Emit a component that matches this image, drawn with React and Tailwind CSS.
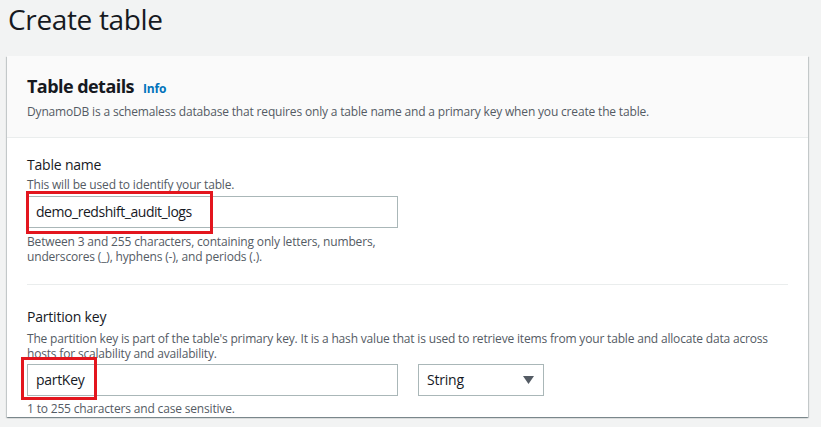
import React from "react";

const font = { fontFamily: '"Open Sans", "Noto Sans", sans-serif' };

export default function App() {
  return (
    <div
      className="w-[821px] h-[427px] overflow-hidden bg-[#f2f3f3] px-[7px] pt-px text-[#16191f]"
      style={font}
    >
      <h1 className="text-[28px] leading-[36px] ml-[1px] font-normal tracking-[-0.35px] text-[#16191f]">
        Create table
      </h1>
      <div className="mt-[19px] w-[801px] bg-white shadow-[0_1px_1px_0_rgba(0,28,36,0.3),1px_1px_1px_0_rgba(0,28,36,0.15),-1px_1px_1px_0_rgba(0,28,36,0.15)]">
        <div className="bg-[#fafafa] border-b border-[#eaeded] px-[20px] pt-[19px] pb-[17px]">
          <div className="flex items-baseline gap-[9px]">
            <h2 className="text-[18px] leading-[22px] font-bold tracking-[-0.55px]">Table details</h2>
            <span className="text-[12px] leading-[16px] font-bold tracking-[-0.2px] text-[#0073bb]">Info</span>
          </div>
          <p className="mt-[7px] text-[12px] leading-[16px] tracking-[-0.17px] text-[#545b64]">
            DynamoDB is a schemaless database that requires only a table name and a primary key when you create the table.
          </p>
        </div>
        <div className="px-[20px] pt-[17px]">
          <div className="text-[14px] leading-[20px] tracking-[-0.2px]">Table name</div>
          <div className="mt-[2px] text-[12px] leading-[16px] tracking-[-0.17px] text-[#545b64]">
            This will be used to identify your table.
          </div>
          <div className="relative mt-[3px] w-[371px]">
            <div className="h-[32px] border border-[#aab7b8] bg-white px-[8px] flex items-center text-[14px] leading-[20px] tracking-[-0.45px]">
              demo_redshift_audit_logs
            </div>
            <div className="absolute left-[-1px] top-[-5px] w-[187px] h-[43px] border-[3px] border-[#e3161e]" />
          </div>
          <div className="mt-[6px] w-[371px] text-[12px] leading-[15px] tracking-[-0.17px] text-[#545b64]">
            Between 3 and 255 characters, containing only letters, numbers, underscores (_), hyphens (-), and periods (.).
          </div>
          <div className="mt-[20px] h-px bg-[#eaeded]" />
          <div className="mt-[22px] text-[14px] leading-[20px] tracking-[-0.2px]">Partition key</div>
          <div className="mt-[4px] text-[12px] leading-[15px] tracking-[-0.18px] text-[#545b64]">
            The partition key is part of the table's primary key. It is a hash value that is used to retrieve items from your table and allocate data across hosts for scalability and availability.
          </div>
          <div className="mt-[3px] flex items-start gap-[20px]">
            <div className="relative w-[371px]">
              <div className="h-[32px] border border-[#aab7b8] bg-white px-[8px] flex items-center text-[14px] leading-[20px] tracking-[-0.3px]">
                partKey
              </div>
              <div className="absolute left-[-6px] top-[-7px] w-[76px] h-[43px] border-[3px] border-[#e3161e]" />
            </div>
            <div className="w-[126px] h-[32px] border border-[#aab7b8] bg-white pl-[8px] pr-[9px] flex items-center justify-between text-[14px] leading-[20px] tracking-[-0.2px]">
              <span>String</span>
              <svg width="11" height="8" viewBox="0 0 11 8">
                <polygon points="0,0 11,0 5.5,8" fill="#545b64" />
              </svg>
            </div>
          </div>
          <div className="mt-[5px] text-[12px] leading-[16px] tracking-[-0.17px] text-[#545b64]">
            1 to 255 characters and case sensitive.
          </div>
        </div>
      </div>
    </div>
  );
}
